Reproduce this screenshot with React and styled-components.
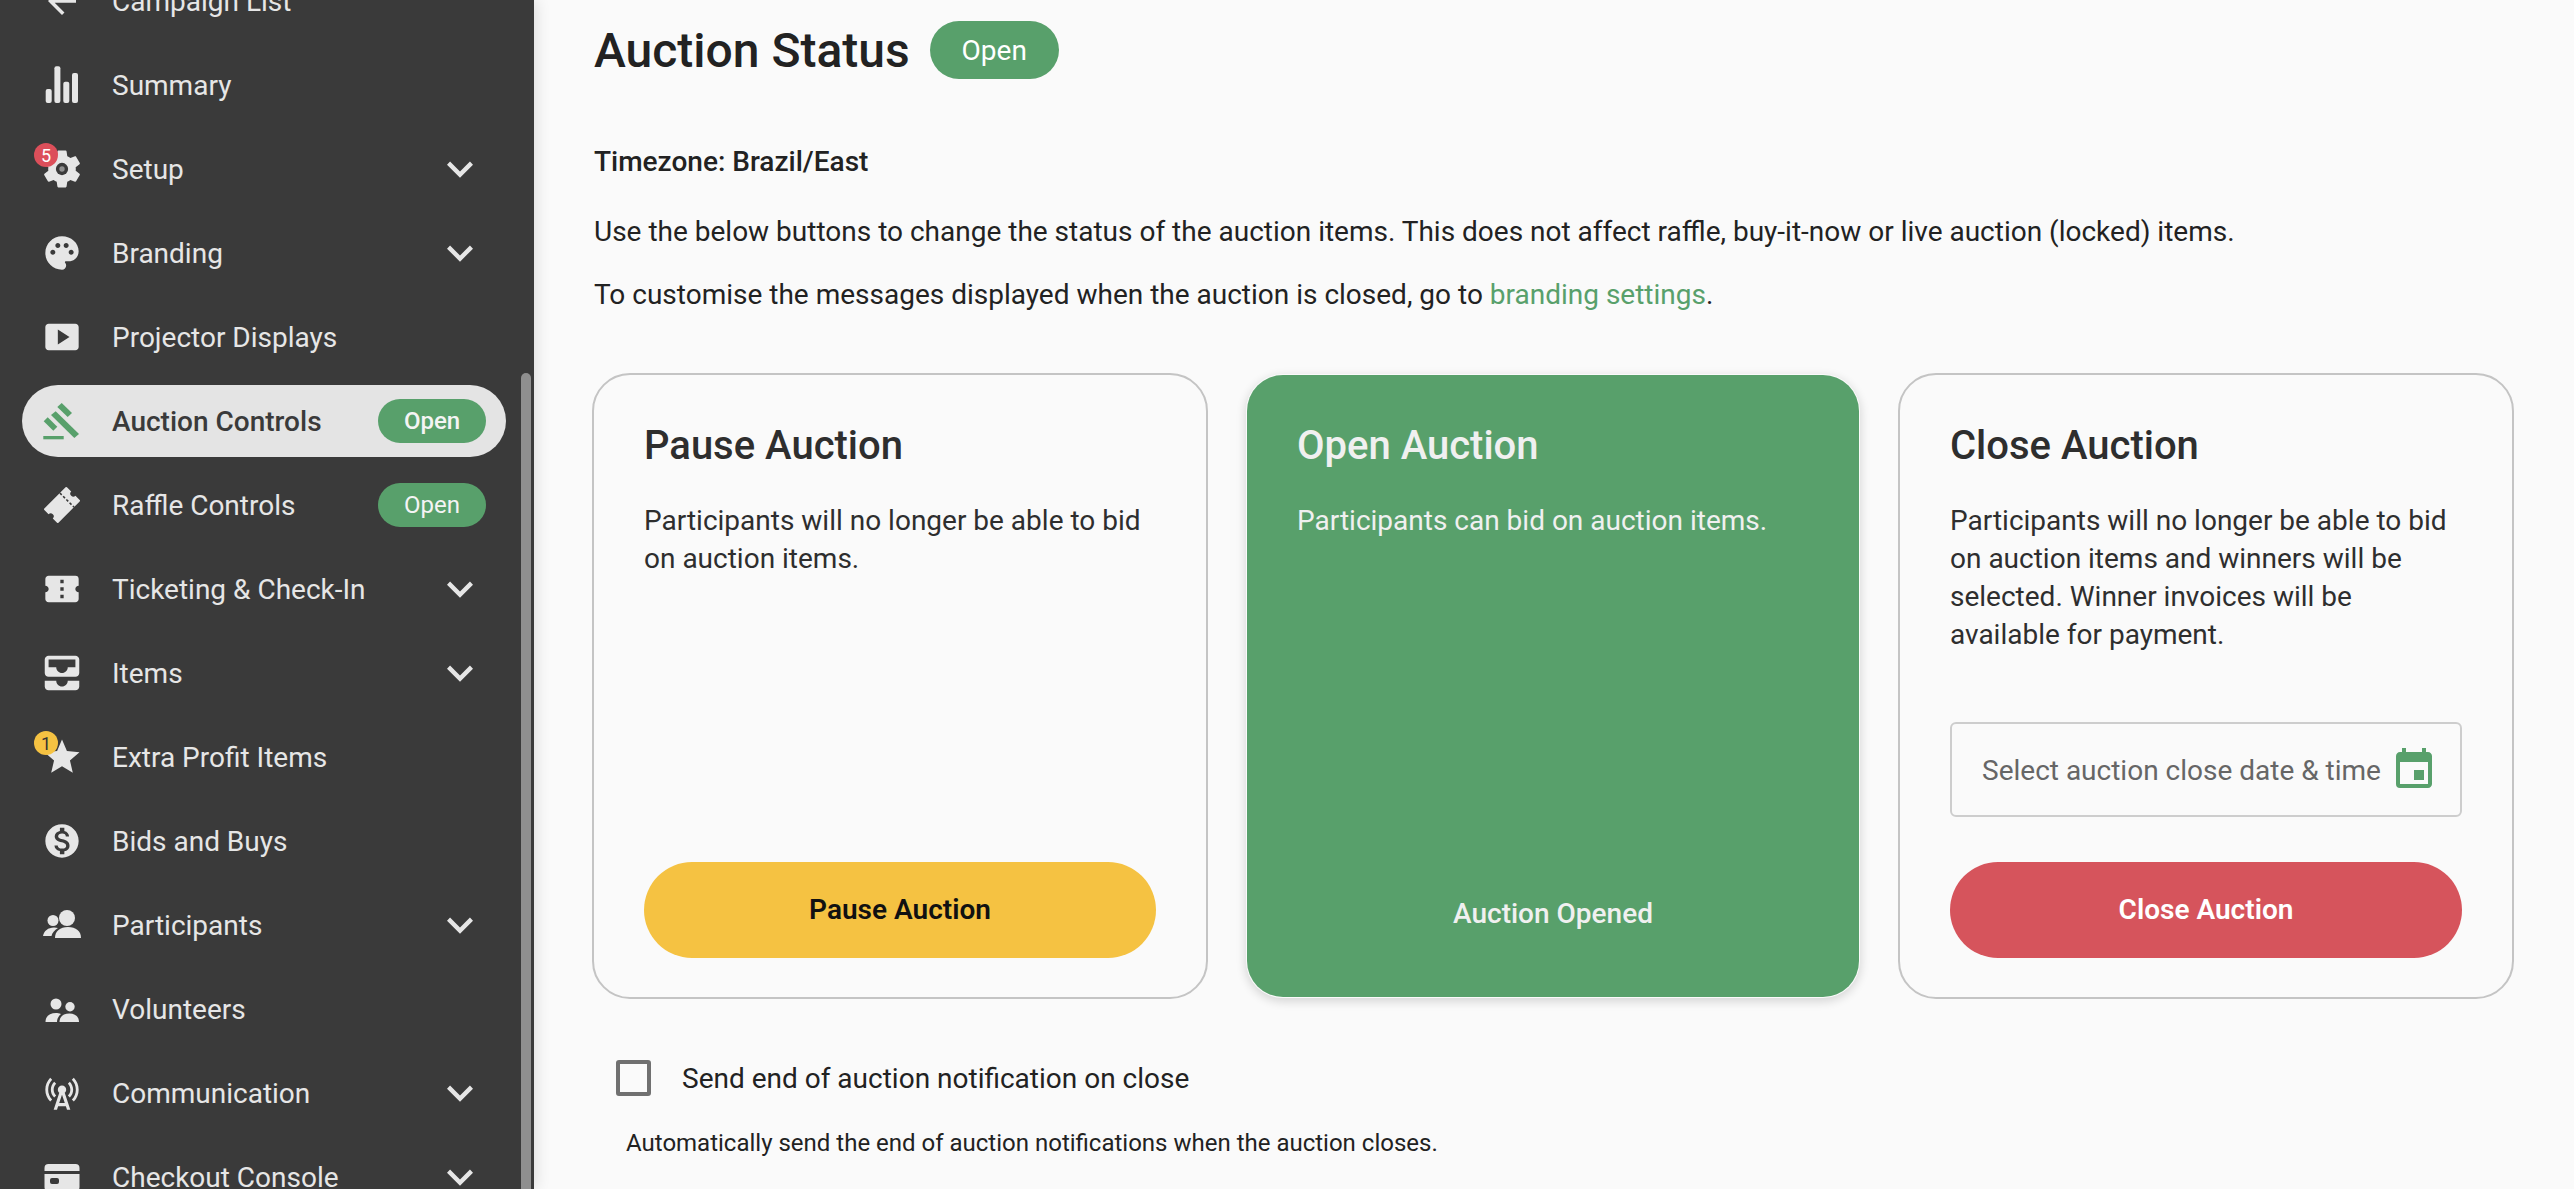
import React from "react";
import styled, { createGlobalStyle } from "styled-components";
import {
  MdArrowBack,
  MdPalette,
  MdSmartDisplay,
  MdConfirmationNumber,
  MdAllInbox,
  MdStar,
  MdMonetizationOn,
  MdCellTower,
  MdExpandMore,
  MdEvent,
} from "react-icons/md";

const GREEN = "#58a06b";
const SIDE = "#3a3a3a";

const GlobalStyle = createGlobalStyle`
  * { box-sizing: border-box; }
  html, body { margin: 0; height: 100%; overflow: hidden; }
  body {
    font-family: Roboto, "Liberation Sans", sans-serif;
    font-size: 28px;
    background: #fafafa;
    color: #222;
  }
`;

const Page = styled.div`
  display: flex;
  width: 2574px;
  height: 1189px;
  overflow: hidden;
`;

const Sidebar = styled.nav`
  position: relative;
  flex: 0 0 534px;
  height: 100%;
  overflow: hidden;
  background: ${SIDE};
  box-shadow: 2px 0 14px rgba(0, 0, 0, 0.12);
  z-index: 1;
`;

// list is scrolled down a bit in the screenshot
const MenuList = styled.ul`
  list-style: none;
  margin: -35px 0 0;
  padding: 0 28px 0 22px;
`;

const MenuRow = styled.li`
  display: flex;
  align-items: center;
  height: 72px;
  margin-bottom: 12px;
  padding: 0 20px 0 20px;
  border-radius: 36px;
  background: ${(p) => (p.$active ? "#e4e4e4" : "transparent")};
  color: ${(p) => (p.$active ? SIDE : "#e6e6e6")};
  font-weight: ${(p) => (p.$active ? 500 : 400)};
`;

const IconSlot = styled.span`
  position: relative;
  display: flex;
  align-items: center;
  justify-content: center;
  flex: 0 0 40px;
  width: 40px;
  height: 40px;
  margin-right: 30px;
  color: ${(p) => p.$color || "#e6e6e6"};

  svg {
    width: ${(p) => p.$size || 40}px;
    height: ${(p) => p.$size || 40}px;
    flex: none;
  }
`;

const CountBadge = styled.span`
  position: absolute;
  top: -6px;
  left: -8px;
  display: flex;
  align-items: center;
  justify-content: center;
  width: 24px;
  height: 24px;
  border-radius: 50%;
  background: ${(p) => p.$bg};
  color: ${(p) => p.$fg};
  font-size: 18px;
`;

const MenuLabel = styled.span`
  flex: 1;
  white-space: nowrap;
`;

const Chevron = styled(MdExpandMore)`
  width: 52px;
  height: 52px;
  color: #e6e6e6;
`;

const OpenTag = styled.span`
  display: flex;
  align-items: center;
  justify-content: center;
  width: 108px;
  height: 44px;
  border-radius: 22px;
  background: ${GREEN};
  color: #f4f4f4;
  font-size: 24px;
`;

const ScrollThumb = styled.div`
  position: absolute;
  top: 373px;
  bottom: -40px;
  left: 521px;
  width: 10px;
  border-radius: 5px;
  background: #8f8f8f;
`;

const Main = styled.main`
  flex: 1;
  min-width: 0;
  padding: 21px 60px 0 59px;
`;

const TitleRow = styled.header`
  display: flex;
  align-items: center;
  gap: 20px;
  height: 58px;
  padding-left: 1px;
`;

const Title = styled.h1`
  margin: 0;
  font-size: 48px;
  font-weight: 500;
  color: #222;
`;

const TitlePill = styled.span`
  display: flex;
  align-items: center;
  justify-content: center;
  width: 129px;
  height: 58px;
  border-radius: 29px;
  background: ${GREEN};
  color: #fff;
  font-size: 28px;
`;

const Timezone = styled.p`
  margin: 64px 0 0 1px;
  line-height: 38px;
  font-weight: 500;
`;

const Paragraph = styled.p`
  margin: ${(p) => p.$gap}px 0 0 1px;
  line-height: 38px;
`;

const TextLink = styled.a`
  color: ${GREEN};
  text-decoration: none;
`;

const CardGrid = styled.section`
  display: grid;
  grid-template-columns: repeat(3, 616px);
  gap: 37px;
  margin: 59px 0 0 -1px;
`;

const Card = styled.article`
  display: flex;
  flex-direction: column;
  height: 626px;
  padding: 48px 50px 39px;
  border: 2px solid ${(p) => (p.$filled ? "transparent" : "#c4c4c4")};
  border-radius: 38px;
  background: ${(p) => (p.$filled ? GREEN : "transparent")};
  background-clip: padding-box;
  color: ${(p) => (p.$filled ? "#f0f0f0" : "#2e2e2e")};
  box-shadow: ${(p) => (p.$filled ? "0 3px 10px rgba(0, 0, 0, 0.14)" : "none")};
`;

const CardTitle = styled.h2`
  margin: 0 0 33px;
  font-size: 40px;
  line-height: 46px;
  font-weight: 500;
`;

const CardText = styled.p`
  margin: 0;
  line-height: 38px;
`;

const CardFooter = styled.div`
  margin-top: auto;
`;

const DateField = styled.div`
  display: flex;
  align-items: center;
  justify-content: space-between;
  height: 95px;
  margin-bottom: 45px;
  padding: 2px 22px 0 30px;
  border: 2px solid #cdcdcd;
  border-radius: 6px;
  color: #666;
  white-space: nowrap;

  svg {
    width: 48px;
    height: 48px;
    margin-top: -2px;
    color: ${GREEN};
    flex: none;
  }
`;

const ActionButton = styled.button`
  display: block;
  width: 100%;
  height: 96px;
  padding: 0 0 2px;
  border: 0;
  border-radius: 48px;
  background: ${(p) => p.$bg};
  color: ${(p) => p.$fg};
  font-family: inherit;
  font-size: 28px;
  font-weight: 600;
`;

const StatusText = styled.div`
  padding-top: 8px;
  height: 96px;
  line-height: 88px;
  text-align: center;
  font-weight: 500;
`;

const CheckRow = styled.label`
  display: flex;
  align-items: center;
  gap: 31px;
  margin: 61px 0 0 23px;
`;

const CheckBox = styled.span`
  width: 35px;
  height: 36px;
  border: 4px solid #707070;
  border-radius: 3px;
`;

const HelpText = styled.p`
  margin: 32px 0 0 33px;
  font-size: 24px;
  line-height: 30px;
  color: #222;
`;

const BarsIcon = () => (
  <svg viewBox="0 0 40 40" fill="currentColor">
    <rect x="3.7" y="24" width="6" height="14" rx="2" />
    <rect x="12.4" y="1.3" width="6" height="36.7" rx="2" />
    <rect x="21.3" y="16.7" width="6" height="21.3" rx="2" />
    <rect x="30" y="8" width="6" height="30" rx="2" />
  </svg>
);

const GearIcon = () => (
  <svg viewBox="0 0 24 24" fill="currentColor">
    <path d="M19.14 12.94c.04-.3.06-.61.06-.94 0-.32-.02-.64-.07-.94l2.03-1.58c.18-.14.23-.41.12-.61l-1.92-3.32c-.12-.22-.37-.29-.59-.22l-2.39.96c-.5-.38-1.03-.7-1.62-.94l-.36-2.54c-.04-.24-.24-.41-.48-.41h-3.84c-.24 0-.43.17-.47.41l-.36 2.54c-.59.24-1.13.57-1.62.94l-2.39-.96c-.22-.08-.47 0-.59.22L2.74 8.87c-.12.21-.08.47.12.61l2.03 1.58c-.05.3-.09.63-.09.94s.02.64.07.94l-2.03 1.58c-.18.14-.23.41-.12.61l1.92 3.32c.12.22.37.29.59.22l2.39-.96c.5.38 1.03.7 1.62.94l.36 2.54c.05.24.24.41.48.41h3.84c.24 0 .44-.17.47-.41l.36-2.54c.59-.24 1.13-.56 1.62-.94l2.39.96c.22.08.47 0 .59-.22l1.92-3.32c.12-.22.07-.47-.12-.61l-2.01-1.58z" />
    <circle cx="12" cy="12" r="3.2" fill={SIDE} />
    <circle cx="12" cy="12" r="1.4" fill="#8f8f8f" />
  </svg>
);

const GavelIcon = () => (
  <svg viewBox="0 0 40 40" fill="currentColor">
    <polygon points="19.7,2 30,12 25.7,16 15.3,6" />
    <polygon points="13.7,10.3 37,33 32.3,37 9,14" />
    <polygon points="5.7,16.3 15.3,25.7 11.3,29.7 1.7,20.3" />
    <rect x="1.3" y="35" width="20.4" height="3.3" />
  </svg>
);

const RaffleIcon = () => (
  <svg viewBox="0 0 40 40" fill="currentColor">
    <g transform="rotate(-45 20 20)">
      <path d="M5 10h30a1 1 0 0 1 1 1v6a3 3 0 0 0 0 6v6a1 1 0 0 1-1 1H5a1 1 0 0 1-1-1v-6a3 3 0 0 0 0-6v-6a1 1 0 0 1 1-1z" />
      <line x1="27" y1="10" x2="27" y2="30" stroke={SIDE} strokeWidth="1.6" strokeDasharray="2.6 2" />
    </g>
  </svg>
);

const ParticipantsIcon = () => (
  <svg viewBox="0 0 40 40" fill="currentColor">
    <circle cx="25" cy="13" r="8" />
    <circle cx="11" cy="15.5" r="5.5" />
    <path d="M13 33C13 26 18 22 26 22S39 26 39 33Z" />
    <path d="M1 31C2 26 6 22.5 12 22.5C13.5 22.5 15 22.7 16 23C12.5 25 10 28 9.5 31Z" />
  </svg>
);

const VolunteersIcon = () => (
  <svg viewBox="0 0 40 40" fill="currentColor">
    <circle cx="14" cy="15" r="5.5" />
    <circle cx="28" cy="17.7" r="4.7" />
    <path d="M3.5 33C3.5 27 8 24 14 24C15.5 24 17 24.2 19 25C16.5 27 15 30 15 33Z" />
    <path d="M17.5 33C17.5 27 22 24.5 27.5 24.5S37 27.5 37 33Z" />
  </svg>
);

const CardPayIcon = () => (
  <svg viewBox="0 0 40 40" fill="currentColor">
    <path d="M6.5 7h27a4 4 0 0 1 4 4v3H2.5v-3a4 4 0 0 1 4-4z" />
    <path fillRule="evenodd" d="M2.5 17h35v13a4 4 0 0 1-4 4h-27a4 4 0 0 1-4-4zM10 21a2 2 0 0 0-2 2v2a2 2 0 0 0 2 2h5a2 2 0 0 0 2-2v-2a2 2 0 0 0-2-2z" />
  </svg>
);

const menu = [
  { label: "Campaign List", icon: <MdArrowBack />, size: 42 },
  { label: "Summary", icon: <BarsIcon /> },
  { label: "Setup", icon: <GearIcon />, size: 46, more: true, badge: { n: 5, bg: "#dc4f5a", fg: "#fff" } },
  { label: "Branding", icon: <MdPalette />, more: true },
  { label: "Projector Displays", icon: <MdSmartDisplay /> },
  { label: "Auction Controls", icon: <GavelIcon />, active: true, tag: true, color: GREEN },
  { label: "Raffle Controls", icon: <RaffleIcon />, tag: true },
  { label: "Ticketing & Check-In", icon: <MdConfirmationNumber />, more: true },
  { label: "Items", icon: <MdAllInbox />, size: 46, more: true },
  { label: "Extra Profit Items", icon: <MdStar />, size: 42, badge: { n: 1, bg: "#f5c242", fg: "#333" } },
  { label: "Bids and Buys", icon: <MdMonetizationOn /> },
  { label: "Participants", icon: <ParticipantsIcon />, more: true },
  { label: "Volunteers", icon: <VolunteersIcon /> },
  { label: "Communication", icon: <MdCellTower />, more: true },
  { label: "Checkout Console", icon: <CardPayIcon />, more: true },
];

export default function App() {
  return (
    <>
      <GlobalStyle />
      <Page>
        <Sidebar>
          <MenuList>
            {menu.map((item) => (
              <MenuRow key={item.label} $active={item.active}>
                <IconSlot $color={item.color} $size={item.size}>
                  {item.icon}
                  {item.badge && (
                    <CountBadge $bg={item.badge.bg} $fg={item.badge.fg}>
                      {item.badge.n}
                    </CountBadge>
                  )}
                </IconSlot>
                <MenuLabel>{item.label}</MenuLabel>
                {item.more && <Chevron />}
                {item.tag && <OpenTag>Open</OpenTag>}
              </MenuRow>
            ))}
          </MenuList>
          <ScrollThumb />
        </Sidebar>

        <Main>
          <TitleRow>
            <Title>Auction Status</Title>
            <TitlePill>Open</TitlePill>
          </TitleRow>
          <Timezone>Timezone: Brazil/East</Timezone>
          <Paragraph $gap={32}>
            Use the below buttons to change the status of the auction items. This does not affect
            raffle, buy-it-now or live auction (locked) items.
          </Paragraph>
          <Paragraph $gap={25}>
            To customise the messages displayed when the auction is closed, go to{" "}
            <TextLink href="#">branding settings</TextLink>.
          </Paragraph>

          <CardGrid>
            <Card>
              <CardTitle>Pause Auction</CardTitle>
              <CardText>Participants will no longer be able to bid on auction items.</CardText>
              <CardFooter>
                <ActionButton $bg="#f5c242" $fg="#111">Pause Auction</ActionButton>
              </CardFooter>
            </Card>
            <Card $filled>
              <CardTitle>Open Auction</CardTitle>
              <CardText>Participants can bid on auction items.</CardText>
              <CardFooter>
                <StatusText>Auction Opened</StatusText>
              </CardFooter>
            </Card>
            <Card>
              <CardTitle>Close Auction</CardTitle>
              <CardText>
                Participants will no longer be able to bid on auction items and winners will be
                selected. Winner invoices will be available for payment.
              </CardText>
              <CardFooter>
                <DateField>
                  Select auction close date &amp; time
                  <MdEvent />
                </DateField>
                <ActionButton $bg="#d6545c" $fg="#fff">Close Auction</ActionButton>
              </CardFooter>
            </Card>
          </CardGrid>

          <CheckRow>
            <CheckBox />
            Send end of auction notification on close
          </CheckRow>
          <HelpText>Automatically send the end of auction notifications when the auction closes.</HelpText>
        </Main>
      </Page>
    </>
  );
}
